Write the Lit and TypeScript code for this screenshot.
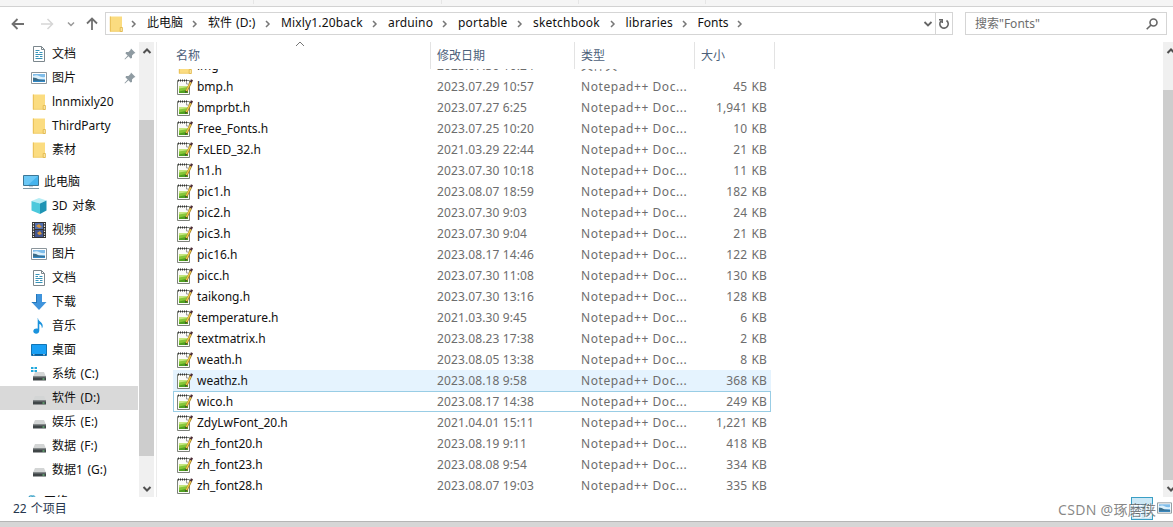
import { LitElement, html, css, svg, nothing } from 'lit';
import { customElement } from 'lit/decorators.js';
import { classMap } from 'lit/directives/class-map.js';

const folder = svg`<path d="M2 .5h12v15H2z" fill="#fbdc80"/><path d="M2.300.5v15" stroke="#e8bd52"/><path d="M2 15.300h12" stroke="#efcb6a" stroke-width=".8"/><path d="M12.200 11.500v4h2.200v-4z" fill="#fbe9a9" stroke="#dfb443" stroke-width=".8"/>`;
const drive = svg`<path d="M4 6h9l2 4.500H2z" fill="#d3d5d5"/><path d="M2 10.500h13v4H2z" fill="#3f4547"/><path d="M2 10.500h13v1H2z" fill="#777d7e"/><path d="M11.500 12.500h2v1h-2z" fill="#79e08a"/>`;
const picture = svg`<path d="M.5 2.500h15v11h-15z" fill="#fff" stroke="#8b959b"/><path d="M2 4h12v8H2z" fill="#7fbdea"/><path d="M2 6q4-1.500 6 0t6 1v2H2z" fill="#dcf0fb"/><path d="M2 7.500l3 .5 3 1.500 6 .5v2H2z" fill="#3d6d88"/><path d="M2 10.800h12V12H2z" fill="#3189c7"/>`;

const icons: Record<string, unknown> = {
  folder,
  drive,
  picture,
  doc: svg`<path d="M2.500.5h8l3 3v12h-11z" fill="#fff" stroke="#7c878d"/><path d="M10.500.5v3h3" fill="none" stroke="#7c878d"/><path d="M4.500 4.500h4M4.500 6.500h2.500M8.500 6.500h3M4.500 8.500h7M4.500 10.500h3M9 10.500h2.500M4.500 12.500h7" stroke="#3793b8"/>`,
  pc: svg`<path d="M.5 1.500h15v10h-15z" fill="#45b4ee" stroke="#3c7796"/><path d="M1 2h14L5 11H1z" fill="#6bc8f6"/><path d="M6 12h4v1.200H6z" fill="#c5d2d9"/><path d="M0 14.500h16" stroke="#7f98a5"/>`,
  cube: svg`<path d="M8 0l7.500 2.500L9 5.500.5 3z" fill="#b4edf5"/><path d="M.5 3L9 5.500V16L.5 12.500z" fill="#4cc9dc"/><path d="M9 5.500l6.500-3v10L9 16z" fill="#1e94b4"/>`,
  video: svg`<path d="M1 0h14v16H1z" fill="#333"/><path d="M4 1h8v6H4z" fill="#526fb0"/><path d="M4 8h8v7H4z" fill="#41558f"/><path d="M5 4l3-2 3 3-3 1zM6 11l3-2 2 3-3 1z" fill="#d5973f"/><path d="M2.500 1v14M13.500 1v14" stroke="#eee" stroke-width="1.200" stroke-dasharray="1.300 1.300"/>`,
  down: svg`<path d="M5 0h6v8h4.500L8 16 .5 8H5z" fill="#3f94dc"/><path d="M5 0h1v9H1.500L.5 8H5z" fill="#2377bb"/>`,
  music: svg`<path d="M7 0c0 3.500 5 4 4.700 8.300-.1 1.300-.7 2-.9 2C11 7.500 9.500 6 8.300 6v6.500C8.300 17 2 16.500 2.300 13c.2-2.300 3-3 4.400-2.200V0z" fill="#1b93dd"/>`,
  desktop: svg`<path d="M.5 2.500h15v11h-15z" fill="#1aa0f5" stroke="#1275b5"/><path d="M1 12h14v1.500H1z" fill="#0c5d96"/><path d="M2 12.700h1.500M12 12.700h2" stroke="#fff" stroke-width=".7"/>`,
  system: svg`${drive}<path d="M0 1h2.500v2H0zM3.500 1H6v2H3.500zM0 4h2.500v2H0zM3.500 4H6v2H3.500z" fill="#21a8dc"/>`,
  network: svg`<path d="M5 5a4 4 0 0 1 8 0z" fill="#3f9ec4"/><path d="M7 2.500l3-1 2 2" fill="none" stroke="#8fd0e4"/>`,
  notepad: svg`<path d="M.5 1.500h12v14H.5z" fill="#fbfbf8" stroke="#7d827a"/><path d="M2 7h9v7H2z" fill="#c4e67e"/><path d="M2 9.500l9-1.500v6H2z" fill="#86c63a"/><path d="M2 12.500l9-2V14H2z" fill="#4fa01f"/><path d="M1 1.500h9" stroke="#333" stroke-width="2" stroke-dasharray="1 1"/><path d="M9.500 2v3h3" fill="none" stroke="#888" stroke-width=".8"/><path d="M14 3L9.300 12.500" stroke="#9a7a1b" stroke-width="2.300"/><path d="M13.800 3L9.300 12" stroke="#f0c64a" stroke-width="1.400"/><path d="M13.800 3.300L15 .8" stroke="#4a2a33" stroke-width="2.300"/><path d="M8.400 14l.1-2.200 1.600.9z" fill="#333"/>`,
};

const icon = (name: string) => html`<svg class="icon" width="16" height="16" viewBox="0 0 16 16">${icons[name]}</svg>`;
const chevron = (d: string, cls: string) => html`<svg class=${cls} width="10" height="10" viewBox="0 0 10 10"><path d=${d} /></svg>`;
const UP = 'M1.500 7L5 3.500 8.500 7';
const DOWN = 'M1.500 3L5 6.500 8.500 3';

interface Place { icon: string; label: string; root?: boolean; pinned?: boolean; selected?: boolean }

const quick: Place[] = [
  { icon: 'doc', label: '文档', pinned: true },
  { icon: 'picture', label: '图片', pinned: true },
  { icon: 'folder', label: 'lnnmixly20' },
  { icon: 'folder', label: 'ThirdParty' },
  { icon: 'folder', label: '素材' },
];
const computer: Place[] = [
  { icon: 'pc', label: '此电脑', root: true },
  { icon: 'cube', label: '3D 对象' },
  { icon: 'video', label: '视频' },
  { icon: 'picture', label: '图片' },
  { icon: 'doc', label: '文档' },
  { icon: 'down', label: '下载' },
  { icon: 'music', label: '音乐' },
  { icon: 'desktop', label: '桌面' },
  { icon: 'system', label: '系统 (C:)' },
  { icon: 'drive', label: '软件 (D:)', selected: true },
  { icon: 'drive', label: '娱乐 (E:)' },
  { icon: 'drive', label: '数据 (F:)' },
  { icon: 'drive', label: '数据1 (G:)' },
];

const files: [string, string, string][] = [
  ['bmp.h', '2023.07.29 10:57', '45 KB'],
  ['bmprbt.h', '2023.07.27 6:25', '1,941 KB'],
  ['Free_Fonts.h', '2023.07.25 10:20', '10 KB'],
  ['FxLED_32.h', '2021.03.29 22:44', '21 KB'],
  ['h1.h', '2023.07.30 10:18', '11 KB'],
  ['pic1.h', '2023.08.07 18:59', '182 KB'],
  ['pic2.h', '2023.07.30 9:03', '24 KB'],
  ['pic3.h', '2023.07.30 9:04', '21 KB'],
  ['pic16.h', '2023.08.17 14:46', '122 KB'],
  ['picc.h', '2023.07.30 11:08', '130 KB'],
  ['taikong.h', '2023.07.30 13:16', '128 KB'],
  ['temperature.h', '2021.03.30 9:45', '6 KB'],
  ['textmatrix.h', '2023.08.23 17:38', '2 KB'],
  ['weath.h', '2023.08.05 13:38', '8 KB'],
  ['weathz.h', '2023.08.18 9:58', '368 KB'],
  ['wico.h', '2023.08.17 14:38', '249 KB'],
  ['ZdyLwFont_20.h', '2021.04.01 15:11', '1,221 KB'],
  ['zh_font20.h', '2023.08.19 9:11', '418 KB'],
  ['zh_font23.h', '2023.08.08 9:54', '334 KB'],
  ['zh_font28.h', '2023.08.07 19:03', '335 KB'],
];

@customElement('app-root')
export class AppRoot extends LitElement {
  static styles = css`
    :host { display: flex; flex-direction: column; position: relative; width: 1173px; height: 527px; overflow: hidden; background: #fff; color: #111; font: 12px/20px "Noto Sans", "Noto Sans CJK SC", sans-serif; }
    * { box-sizing: border-box; }
    svg { display: block; flex: none; }
    .ribbon { height: 7px; flex: none; background: #f5f5f5; border-bottom: 1px solid #d2d2d2; display: flex; }
    .ribbon i { height: 4px; border-right: 1px solid #e6e6e6; }
    .r1 { width: 254px; } .r2 { width: 188px; } .r3 { width: 137px; } .r4 { width: 127px; }
    .nav { height: 35px; flex: none; display: flex; padding-top: 5px; }
    .arrows { width: 105px; height: 23px; display: flex; align-items: center; padding: 0 0 0 11px; }
    .arrows svg { fill: none; stroke: #707070; stroke-width: 1.800; }
    .arrows .fwd { stroke: #d6d6d6; margin-left: 15px; stroke-width: 1.500; }
    .arrows .recent { stroke: #999; margin-left: 12px; stroke-width: 1.500; }
    .arrows .up { margin-left: 10px; }
    .address { width: 848px; height: 23px; border: 1px solid #d5d5d5; display: flex; align-items: center; padding-left: 2px; }
    .crumb { display: flex; align-items: center; white-space: nowrap; padding-bottom: 2px; word-spacing: 1px; }
    .sep { fill: none; stroke: #777; stroke-width: 1.500; margin: 2px 8px 0 6px; width: 10px; }
    .c0 { width: 61px; } .c1 { width: 73px; } .c2 { width: 107px; } .c3 { width: 70px; } .c4 { width: 75px; } .c5 { width: 92.500px; } .c6 { width: 72px; }
    .c0 .sep, .c1 .sep, .c2 .sep, .c3 .sep, .c4 .sep, .c5 .sep, .c6 .sep { margin-left: auto; margin-right: 8px; }
    .c2 span { letter-spacing: .16px; } .c3 span { letter-spacing: .15px; } .c4 span { letter-spacing: .2px; }
    .c5 span { letter-spacing: .2px; } .c6 span { letter-spacing: .2px; }
    .c7 .sep { margin-left: 7px; }
    .lead { margin: 0 8px 0 5px; }
    .drop { fill: none; stroke: #666; stroke-width: 1.800; margin-left: auto; margin-right: 2px; }
    .refresh { height: 21px; width: 17px; border-left: 1px solid #d5d5d5; display: grid; place-items: center; }
    .refresh svg { fill: none; stroke: #666; stroke-width: 1.600; }
    .search { margin-left: 12px; width: 202px; height: 23px; border: 1px solid #d5d5d5; display: flex; align-items: center; justify-content: space-between; padding: 0 8px 0 9px; color: #6d6d6d; }
    .search svg { fill: none; stroke: #666; stroke-width: 1.600; }
    .body { height: 455px; flex: none; display: flex; }
    .tree { width: 139px; overflow: hidden; }
    .place { display: flex; align-items: center; height: 24px; width: 138px; padding: 0 2px 0 31px; white-space: nowrap; word-spacing: 1.500px; }
    .place .label { margin-left: 5px; padding-bottom: 1px; }
    .place.root { padding-left: 23px; }
    .place.selected { background: #d9d9d9; }
    .pin { margin-left: auto; }
    .group { margin-bottom: 8px; }
    .scroll { width: 15px; background: #f0f0f0; display: flex; flex-direction: column; align-items: center; justify-content: space-between; flex: none; overflow: hidden; }
    .scroll svg { fill: none; stroke: #505050; stroke-width: 2; margin: 4px 0 3px; }
    .thumb { width: 15px; background: #cdcdcd; }
    .treebar .thumb { height: 336px; margin-top: 61px; margin-bottom: auto; }
    .treebar svg:last-child { margin-top: 0; }
    .listbar { margin-left: auto; width: 10px; align-items: flex-start; }
    .listbar svg { margin-left: 3px; }
    .listbar .thumb { height: 390px; margin-top: 31px; margin-bottom: auto; }
    .edge { width: 3px; border-right: 1px solid #ececec; margin-right: 16px; }
    .list { width: 602px; }
    .row, .head { display: grid; grid-template-columns: 257px 144px 120px 80px; }
    .head { grid-template-columns: 258px 144px 120px 80px; height: 27px; color: #4c607a; position: relative; }
    .head div { border-right: 1px solid #e3e3e3; padding: 4px 0 0 6px; }
    .head div:first-child { padding-left: 3px; }
    .sort { position: absolute; left: 122px; top: -3px; fill: none; stroke: #777; }
    .clip { height: 428px; overflow: hidden; display: flex; flex-direction: column; justify-content: flex-end; padding-bottom: 1px; }
    .row { height: 21px; flex: none; width: 598px; border: 1px solid transparent; color: #6d6d6d; align-items: center; line-height: 19px; white-space: nowrap; }
    .row > span { padding-left: 6px; letter-spacing: .12px; }
    .row > .type { letter-spacing: .57px; }
    .row > .size { text-align: right; padding: 0; width: 72px; word-spacing: 1px; }
    .name { display: flex; align-items: center; color: #111; gap: 4px; padding-left: 3px; }
    .name span { letter-spacing: -.02px; }
    .row.hover { background: #e5f3fe; }
    .row.focus { border-color: #99cde5; }
    .status { height: 24px; flex: none; display: flex; align-items: center; padding-left: 13px; color: #26364e; word-spacing: 1px; }
    .views { margin-left: auto; display: flex; align-items: center; gap: 4px; padding-right: 1px; }
    .details { width: 22px; height: 23px; border: 1px solid #3a9fc5; background: #cce8f6; display: grid; place-items: center; margin-top: -1px; }
    .views .icon { width: 15px; margin-top: -2px; }
    .bottom { height: 6px; background: #d6d6d6; border-top: 1px solid #b5b5b5; }
    .mark { position: absolute; left: 1058px; top: 500px; font-size: 14px; color: rgba(95, 95, 95, .75); white-space: nowrap; text-shadow: 1px 1px 0 #fff; letter-spacing: .3px; }
  `;

  private place(p: Place) {
    return html`<div class=${classMap({ place: true, root: !!p.root, selected: !!p.selected })}>
      ${icon(p.icon)}<span class="label">${p.label}</span>
      ${p.pinned ? html`<svg class="pin" width="12" height="12" viewBox="0 0 12 12"><path d="M7 .5L11.500 5l-1.500.5-2 2 0 2.500-1.500.5L4.500 8.300 1 11.500.5 11l3.200-3.500L1.500 5.500 2 4h2.500l2-2z" fill="#8f9ba2"/></svg>` : nothing}
    </div>`;
  }

  render() {
    const crumbs = ['此电脑', '软件 (D:)', 'Mixly1.20back', 'arduino', 'portable', 'sketchbook', 'libraries', 'Fonts'];
    return html`
      <div class="ribbon"><i class="r1"></i><i class="r2"></i><i class="r3"></i><i class="r4"></i></div>
      <div class="nav">
        <div class="arrows">
          <svg width="14" height="12" viewBox="0 0 14 12"><path d="M6.500 1L1.500 6l5 5M1.500 6H13"/></svg>
          <svg class="fwd" width="14" height="12" viewBox="0 0 14 12"><path d="M7.500 1l5 5-5 5M12.500 6H1"/></svg>
          ${chevron('M2 3.500l3 3 3-3', 'recent')}
          <svg class="up" width="12" height="13" viewBox="0 0 12 13"><path d="M1 6.500L6 1.500l5 5M6 1.500V13"/></svg>
        </div>
        <div class="address">
          ${icon('folder')}
          ${chevron('M3 2l3 3-3 3', 'sep lead')}
          ${crumbs.map((c, i) => html`<div class="crumb c${i}"><span>${c}</span>${chevron('M3 2l3 3-3 3', 'sep')}</div>`)}
          ${chevron(DOWN, 'drop')}
          <div class="refresh"><svg width="12" height="12" viewBox="0 0 12 12"><path d="M8.500 2.500A4.200 4.200 0 1 1 3 3M1 1.800h3.200V5"/></svg></div>
        </div>
        <div class="search"><span>搜索"Fonts"</span><svg width="12" height="12" viewBox="0 0 12 12"><circle cx="7.500" cy="4.500" r="3.500"/><path d="M5 7L.7 11.300"/></svg></div>
      </div>
      <div class="body">
        <div class="tree">
          <div class="group">${quick.map((p) => this.place(p))}</div>
          <div class="group">${computer.map((p) => this.place(p))}</div>
          ${this.place({ icon: 'network', label: '网络', root: true })}
        </div>
        <div class="scroll treebar">${chevron(UP, '')}<div class="thumb"></div>${chevron(DOWN, '')}</div>
        <div class="edge"></div>
        <div class="list">
          <div class="head"><div>名称</div><div>修改日期</div><div>类型</div><div>大小</div>${chevron('M1 7l4-4 4 4', 'sort')}</div>
          <div class="clip">
            <div class="row"><div class="name">${icon('folder')}<span>img</span></div><span>2023.07.30 10:24</span><span>文件夹</span><span></span></div>
            ${files.map(([name, date, size]) => html`<div class=${classMap({ row: true, hover: name === 'weathz.h', focus: name === 'wico.h' })}>
              <div class="name">${icon('notepad')}<span>${name}</span></div><span>${date}</span><span class="type">Notepad++ Doc...</span><span class="size">${size}</span></div>`)}
          </div>
        </div>
        <div class="scroll listbar">${chevron(UP, '')}<div class="thumb"></div>${chevron(DOWN, '')}</div>
      </div>
      <div class="status"><span>22 个项目</span>
        <div class="views"><div class="details"><svg width="14" height="12" viewBox="0 0 14 12"><path d="M0 1.500h4M6 1.500h8M0 4.500h4M6 4.500h8M0 7.500h4M6 7.500h8M0 10.500h4M6 10.500h8" stroke="#64808e"/></svg></div>${icon('picture')}</div>
      </div>
      <div class="bottom"></div>
      <div class="mark">CSDN @琢磨侠</div>
    `;
  }
}
